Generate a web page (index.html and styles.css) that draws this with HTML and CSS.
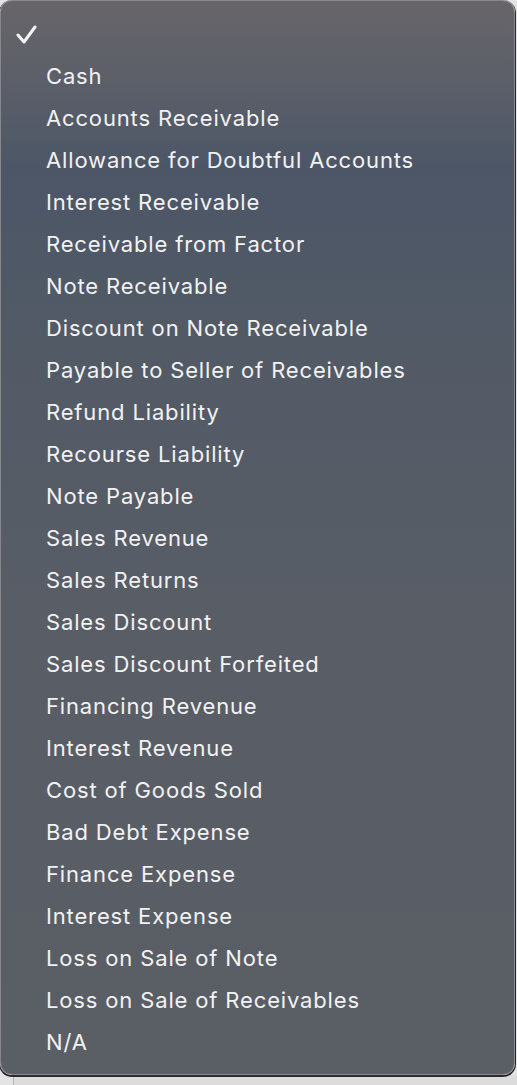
FILE: index.html
```html
<!DOCTYPE html>
<html>
<head>
<meta charset="utf-8">
<link rel="stylesheet" href="styles.css">
</head>
<body>
<div class="menu">
  <ul class="items">
    <li class="item checked"><svg class="check" width="22" height="20" viewBox="0 0 22 20"><polyline points="2,10 8,17 19,2" fill="none" stroke="#f4f4f4" stroke-width="3" stroke-linecap="round" stroke-linejoin="round"/></svg></li>
    <li class="item">Cash</li>
    <li class="item">Accounts Receivable</li>
    <li class="item">Allowance for Doubtful Accounts</li>
    <li class="item">Interest Receivable</li>
    <li class="item">Receivable from Factor</li>
    <li class="item">Note Receivable</li>
    <li class="item">Discount on Note Receivable</li>
    <li class="item">Payable to Seller of Receivables</li>
    <li class="item">Refund Liability</li>
    <li class="item">Recourse Liability</li>
    <li class="item">Note Payable</li>
    <li class="item">Sales Revenue</li>
    <li class="item">Sales Returns</li>
    <li class="item">Sales Discount</li>
    <li class="item">Sales Discount Forfeited</li>
    <li class="item">Financing Revenue</li>
    <li class="item">Interest Revenue</li>
    <li class="item">Cost of Goods Sold</li>
    <li class="item">Bad Debt Expense</li>
    <li class="item">Finance Expense</li>
    <li class="item">Interest Expense</li>
    <li class="item">Loss on Sale of Note</li>
    <li class="item">Loss on Sale of Receivables</li>
    <li class="item">N/A</li>
  </ul>
</div>
<div class="under">
  <div class="under-line"></div>
</div>
</body>
</html>
```
FILE: styles.css
```css
html, body {
  margin: 0;
  padding: 0;
  background: #e4e4e4;
  height: 1085px;
  overflow: hidden;
}
.menu {
  width: 513px;
  height: 1073px;
  border: 1px solid #88888b;
  border-radius: 12px;
  box-shadow: 0 1px 0 1px #2a2a2c;
  background: linear-gradient(180deg, #676569 0px, #5f6169 60px, #4c5667 170px, #525a66 330px, #585d66 600px, #5a5f66 1075px);
  font-family: "Inter", "Liberation Sans", sans-serif;
  color: #f2f2f2;
  position: relative;
  z-index: 1;
}
.items {
  list-style: none;
  margin: 0;
  padding: 12px 0 0 0;
}
.item {
  height: 42px;
  line-height: 42px;
  padding-left: 45px;
  font-size: 22px;
  letter-spacing: 0.85px;
  white-space: nowrap;
}
.checked {
  position: relative;
}
.check {
  position: absolute;
  left: 15px;
  top: 12px;
}
.under {
  height: 10px;
  margin-left: 13px;
  border-left: 1px solid #b4b4b4;
  background: #dcdcdc;
}
.under-line {
  margin-left: 41px;
  width: 338px;
  height: 2px;
  background: #2c2c2c;
}
```
